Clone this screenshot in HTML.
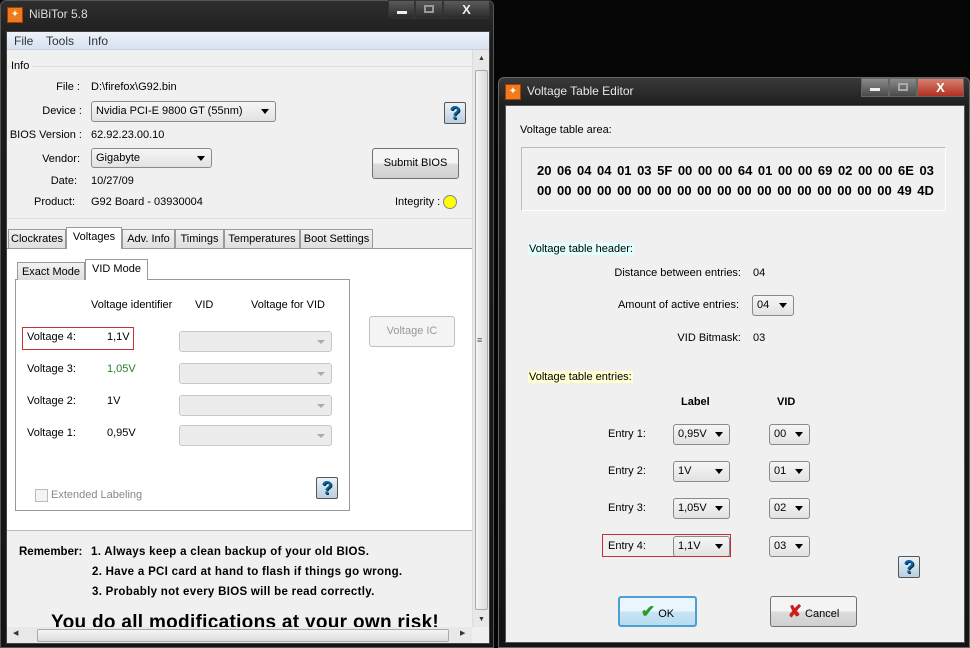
<!DOCTYPE html>
<html><head><meta charset="utf-8"><style>
*{box-sizing:border-box;margin:0;padding:0}
body{width:970px;height:648px;background:#050505;position:relative;overflow:hidden;font-family:"Liberation Sans",sans-serif;font-size:11px;color:#000}
.a{position:absolute;white-space:nowrap}
.sel{position:absolute;border:1px solid #8a8a8a;border-radius:3px;background:linear-gradient(#f6f6f6,#e2e2e2);padding:2px 4px;font-size:11px;line-height:14px;white-space:nowrap}
.sel:after{content:"";position:absolute;right:6px;top:7px;border:4px solid transparent;border-top:5px solid #000}
.dis{position:absolute;border:1px solid #c8c8c8;border-radius:3px;background:#ececec;height:21px;width:153px;left:179px}
.dis:after{content:"";position:absolute;right:6px;top:8px;border:4px solid transparent;border-top:4px solid #aaa}
.btn{position:absolute;border:1px solid #707070;border-radius:3px;background:linear-gradient(#f4f4f4 50%,#dcdcdc 50%,#d0d0d0);text-align:center;white-space:nowrap}
.q{position:absolute;width:22px;height:22px;border:1px solid #555;border-radius:2px;background:linear-gradient(#eaf2f8,#b8cfe0);color:#0e5fa8;font:bold 18px/20px "Liberation Sans",sans-serif;text-align:center;text-shadow:1px 1px 0 #033}
.tab{position:absolute;top:229px;height:19px;border:1px solid #9a9a9a;border-bottom:none;background:linear-gradient(#f2f2f2,#dedede);padding:3px 0 0;font-size:11px;white-space:nowrap;text-align:center;overflow:hidden}
.wb{position:absolute;height:19px;border:1px solid #333;background:linear-gradient(#5a5a5a,#2a2a2a);}
.t{font-size:11px}
</style></head><body>

<!-- LEFT WINDOW -->
<div class="a" style="left:0;top:0;width:494px;height:648px;background:linear-gradient(#2e2e2e,#1c1c1c 40px,#141414);border:1px solid #555;border-radius:6px 6px 0 0"></div>
<div class="a" style="left:7px;top:7px;width:16px;height:16px;background:#f07a20;border:1px solid #a04000;color:#ffd;font-size:10px;line-height:14px;text-align:center">✦</div>
<div class="a" style="left:29px;top:7px;color:#ddd;font-size:12px">NiBiTor 5.8</div>
<div class="wb" style="left:388px;top:0;width:27px;border-radius:0 0 0 4px"><div class="a" style="left:8px;top:10px;width:10px;height:3px;background:#eee"></div></div>
<div class="wb" style="left:415px;top:0;width:28px"><div class="a" style="left:8px;top:4px;width:10px;height:8px;border:2px solid #999"></div></div>
<div class="wb" style="left:443px;top:0;width:47px;border-radius:0 0 4px 0;color:#eee;font:bold 13px/17px 'Liberation Sans';text-align:center">X</div>

<div class="a" style="left:6px;top:31px;width:484px;height:613px;background:#f0f0f0;border:1px solid #444"></div>
<div class="a" style="left:7px;top:32px;width:482px;height:18px;background:linear-gradient(#eef2fa,#d8e2f0);border-bottom:1px solid #c8d0dc"></div>
<div class="a" style="left:14px;top:34px;color:#333;font-size:12px">File</div>
<div class="a" style="left:46px;top:34px;color:#333;font-size:12px">Tools</div>
<div class="a" style="left:88px;top:34px;color:#333;font-size:12px">Info</div>

<!-- scrollbars -->
<div class="a" style="left:472px;top:50px;width:17px;height:577px;background:#e8e8e8;border-left:1px solid #ddd"></div>
<div class="a" style="left:475px;top:70px;width:13px;height:540px;background:linear-gradient(90deg,#f4f4f4,#dcdcdc);border:1px solid #aaa;border-radius:2px"></div>
<div class="a" style="left:477px;top:335px;font-size:9px;color:#555">≡</div>
<div class="a" style="left:478px;top:55px;font-size:7px;color:#333">▲</div>
<div class="a" style="left:478px;top:616px;font-size:7px;color:#333">▼</div>
<div class="a" style="left:7px;top:627px;width:465px;height:16px;background:#e8e8e8"></div>
<div class="a" style="left:37px;top:629px;width:412px;height:13px;background:linear-gradient(#f4f4f4,#dcdcdc);border:1px solid #aaa;border-radius:2px"></div>
<div class="a" style="left:13px;top:629px;font-size:7px;color:#333">◀</div>
<div class="a" style="left:460px;top:629px;font-size:7px;color:#333">▶</div>

<!-- Info group -->
<div class="a" style="left:11px;top:60px">Info</div>
<div class="a" style="left:32px;top:66px;width:440px;height:1px;background:#ddd"></div>
<div class="a" style="left:7px;top:66px;width:4px;height:1px;background:#ddd"></div>
<div class="a" style="left:0;top:81px;width:80px;text-align:right">File :</div>
<div class="a" style="left:0;top:105px;width:82px;text-align:right">Device :</div>
<div class="a" style="left:0;top:129px;width:82px;text-align:right">BIOS Version :</div>
<div class="a" style="left:0;top:153px;width:80px;text-align:right">Vendor:</div>
<div class="a" style="left:0;top:175px;width:77px;text-align:right">Date:</div>
<div class="a" style="left:0;top:196px;width:75px;text-align:right">Product:</div>
<div class="a" style="left:91px;top:81px">D:\firefox\G92.bin</div>
<div class="sel" style="left:91px;top:101px;width:185px;height:21px">Nvidia PCI-E 9800 GT (55nm)</div>
<div class="a" style="left:91px;top:129px">62.92.23.00.10</div>
<div class="sel" style="left:91px;top:148px;width:121px;height:20px">Gigabyte</div>
<div class="a" style="left:91px;top:175px">10/27/09</div>
<div class="a" style="left:91px;top:196px">G92 Board - 03930004</div>
<div class="q" style="left:444px;top:102px">?</div>
<div class="btn" style="left:372px;top:148px;width:87px;height:31px;line-height:29px">Submit BIOS</div>
<div class="a" style="left:395px;top:196px">Integrity :</div>
<div class="a" style="left:443px;top:195px;width:14px;height:14px;border-radius:50%;background:#ff0;border:1px solid #888"></div>
<div class="a" style="left:7px;top:218px;width:465px;height:1px;background:#ddd"></div>

<!-- tabs -->
<div class="a" style="left:7px;top:248px;width:465px;height:282px;background:#fff;border-top:1px solid #999"></div>
<div class="tab" style="left:8px;width:58px">Clockrates</div>
<div class="tab" style="left:66px;top:227px;width:56px;height:22px;background:#fff">Voltages</div>
<div class="tab" style="left:122px;width:53px">Adv. Info</div>
<div class="tab" style="left:175px;width:49px">Timings</div>
<div class="tab" style="left:224px;width:76px">Temperatures</div>
<div class="tab" style="left:300px;width:73px">Boot Settings</div>

<div class="a" style="left:15px;top:279px;width:335px;height:232px;border:1px solid #999;background:#fff"></div>
<div class="tab" style="left:17px;top:262px;width:68px;height:18px">Exact Mode</div>
<div class="tab" style="left:85px;top:259px;width:63px;height:21px;background:#fff">VID Mode</div>
<div class="a" style="left:91px;top:299px">Voltage identifier</div>
<div class="a" style="left:195px;top:299px">VID</div>
<div class="a" style="left:251px;top:299px">Voltage for VID</div>
<div class="a" style="left:22px;top:327px;width:112px;height:23px;border:1px solid #c83030"></div>
<div class="a" style="left:27px;top:331px">Voltage 4:</div><div class="a" style="left:107px;top:331px">1,1V</div>
<div class="a" style="left:27px;top:363px">Voltage 3:</div><div class="a" style="left:107px;top:363px;color:#2a7a2a">1,05V</div>
<div class="a" style="left:27px;top:395px">Voltage 2:</div><div class="a" style="left:107px;top:395px">1V</div>
<div class="a" style="left:27px;top:427px">Voltage 1:</div><div class="a" style="left:107px;top:427px">0,95V</div>
<div class="dis" style="top:331px"></div><div class="dis" style="top:363px"></div><div class="dis" style="top:395px"></div><div class="dis" style="top:425px"></div>
<div class="a" style="left:369px;top:316px;width:86px;height:31px;border:1px solid #c0c0c0;border-radius:3px;background:#f4f4f4;color:#999;text-align:center;line-height:29px">Voltage IC</div>
<div class="a" style="left:35px;top:489px;width:13px;height:13px;border:1px solid #bbb;background:#f4f4f4"></div>
<div class="a" style="left:51px;top:489px;color:#888">Extended Labeling</div>
<div class="q" style="left:316px;top:477px">?</div>

<div class="a" style="left:7px;top:530px;width:465px;height:1px;background:#bbb"></div>
<div class="a" style="left:19px;top:546px;font-weight:bold;font-size:11.5px">Remember:</div>
<div class="a" style="left:91px;top:546px;font-weight:bold;font-size:11.5px;letter-spacing:0.3px">1. Always keep a clean backup of your old BIOS.</div>
<div class="a" style="left:92px;top:566px;font-weight:bold;font-size:11.5px;letter-spacing:0.3px">2. Have a PCI card at hand to flash if things go wrong.</div>
<div class="a" style="left:92px;top:586px;font-weight:bold;font-size:11.5px;letter-spacing:0.3px">3. Probably not every BIOS will be read correctly.</div>
<div class="a" style="left:7px;top:610px;width:465px;height:17px;overflow:hidden"><div class="a" style="left:44px;top:2px;font-weight:bold;font-size:19px;letter-spacing:0.3px">You do all modifications at your own risk!</div></div>

<!-- RIGHT WINDOW -->
<div class="a" style="left:498px;top:77px;width:472px;height:571px;background:linear-gradient(#3a3a3a,#1e1e1e 28px,#141414);border:1px solid #666;border-radius:6px 6px 0 0"></div>
<div class="a" style="left:505px;top:84px;width:16px;height:16px;background:#f07a20;border:1px solid #a04000;color:#ffd;font-size:10px;line-height:14px;text-align:center">✦</div>
<div class="a" style="left:527px;top:84px;color:#e8e8e8;font-size:12px">Voltage Table Editor</div>
<div class="wb" style="left:861px;top:78px;width:28px;border-color:#666;background:linear-gradient(#8a8a8a,#4a4a4a)"><div class="a" style="left:8px;top:9px;width:10px;height:3px;background:#eee"></div></div>
<div class="wb" style="left:889px;top:78px;width:28px;border-color:#666;background:linear-gradient(#8a8a8a,#4a4a4a)"><div class="a" style="left:8px;top:4px;width:10px;height:8px;border:2px solid #aaa"></div></div>
<div class="wb" style="left:917px;top:78px;width:47px;border-color:#666;background:linear-gradient(#d88070,#b03020);color:#fff;font:bold 13px/17px 'Liberation Sans';text-align:center">X</div>

<div class="a" style="left:505px;top:105px;width:460px;height:538px;background:#f0f0f0;border:1px solid #555"></div>
<div class="a" style="left:520px;top:124px">Voltage table area:</div>
<div class="a" style="left:521px;top:147px;width:425px;height:64px;border:1px solid #bbb;border-bottom-color:#fff;border-right-color:#fff;background:#f0f0f0"></div>
<div class="a" style="left:537px;top:163px;width:397px;display:flex;justify-content:space-between;font-weight:bold;font-size:13px"><span>20</span><span>06</span><span>04</span><span>04</span><span>01</span><span>03</span><span>5F</span><span>00</span><span>00</span><span>00</span><span>64</span><span>01</span><span>00</span><span>00</span><span>69</span><span>02</span><span>00</span><span>00</span><span>6E</span><span>03</span></div>
<div class="a" style="left:537px;top:183px;width:397px;display:flex;justify-content:space-between;font-weight:bold;font-size:13px"><span>00</span><span>00</span><span>00</span><span>00</span><span>00</span><span>00</span><span>00</span><span>00</span><span>00</span><span>00</span><span>00</span><span>00</span><span>00</span><span>00</span><span>00</span><span>00</span><span>00</span><span>00</span><span>49</span><span>4D</span></div>

<div class="a t" style="left:528px;top:243px;background:#e0ffff;padding:0 1px">Voltage table header:</div>
<div class="a t" style="left:500px;top:267px;width:241px;text-align:right">Distance between entries:</div>
<div class="a t" style="left:753px;top:267px">04</div>
<div class="a t" style="left:500px;top:299px;width:239px;text-align:right">Amount of active entries:</div>
<div class="sel t" style="left:752px;top:295px;width:42px;height:21px">04</div>
<div class="a t" style="left:500px;top:332px;width:241px;text-align:right">VID Bitmask:</div>
<div class="a t" style="left:753px;top:332px">03</div>

<div class="a t" style="left:528px;top:371px;background:#ffffd0;padding:0 1px">Voltage table entries:</div>
<div class="a" style="left:681px;top:396px;font-weight:bold">Label</div>
<div class="a" style="left:777px;top:396px;font-weight:bold">VID</div>

<div class="a t" style="left:608px;top:428px">Entry 1:</div><div class="sel" style="left:673px;top:424px;width:57px;height:21px">0,95V</div><div class="sel" style="left:769px;top:424px;width:41px;height:21px">00</div>
<div class="a t" style="left:608px;top:465px">Entry 2:</div><div class="sel" style="left:673px;top:461px;width:57px;height:21px">1V</div><div class="sel" style="left:769px;top:461px;width:41px;height:21px">01</div>
<div class="a t" style="left:608px;top:502px">Entry 3:</div><div class="sel" style="left:673px;top:498px;width:57px;height:21px">1,05V</div><div class="sel" style="left:769px;top:498px;width:41px;height:21px">02</div>
<div class="a t" style="left:608px;top:540px">Entry 4:</div><div class="sel" style="left:673px;top:536px;width:57px;height:21px">1,1V</div><div class="sel" style="left:769px;top:536px;width:41px;height:21px">03</div>
<div class="a" style="left:602px;top:534px;width:129px;height:23px;border:1px solid #c83030"></div>
<div class="q" style="left:898px;top:556px">?</div>

<div class="btn" style="left:618px;top:596px;width:79px;height:31px;border:2px solid #4aa0d0;background:linear-gradient(#eaf6fd 50%,#c8e4f4 50%,#b8dcf0);line-height:27px"><span style="color:#2a9a2a;font-weight:bold;font-size:17px">✔</span> OK</div>
<div class="btn" style="left:770px;top:596px;width:87px;height:31px;line-height:29px"><span style="color:#c82020;font-weight:bold;font-size:17px">✘</span> Cancel</div>
</body></html>
